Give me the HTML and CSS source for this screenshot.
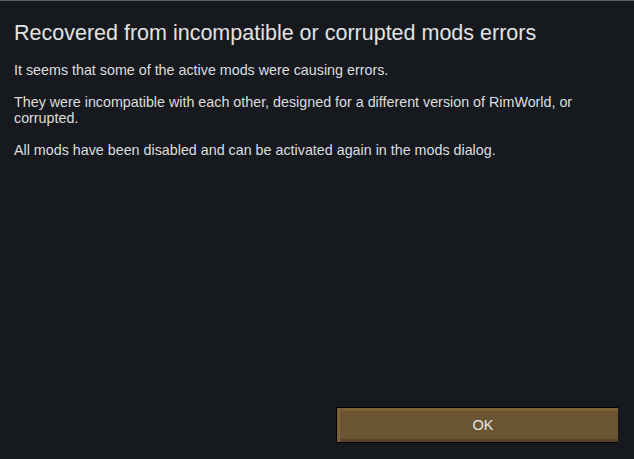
FILE: index.html
```html
<!DOCTYPE html>
<html>
<head>
<meta charset="utf-8">
<link rel="stylesheet" href="styles.css">
</head>
<body>
<div class="dialog">
  <h1 class="title">Recovered from incompatible or corrupted mods errors</h1>
  <div class="body">
    <p>It seems that some of the active mods were causing errors.</p>
    <p>They were incompatible with each other, designed for a different version of RimWorld, or corrupted.</p>
    <p>All mods have been disabled and can be activated again in the mods dialog.</p>
  </div>
  <div class="footer">
    <button class="ok">OK</button>
  </div>
</div>
</body>
</html>
```
FILE: styles.css
```css
html, body {
  margin: 0;
  padding: 0;
  height: 100%;
  background: #16191e;
}
.dialog {
  box-sizing: border-box;
  height: 459px;
  width: 634px;
  border-top: 1px solid #5b616b;
  padding: 18px 14px 0 14px;
  display: flex;
  flex-direction: column;
  font-family: "Liberation Sans", Arial, sans-serif;
  color: #dedede;
}
.title {
  margin: 0;
  font-size: 21.5px;
  font-weight: normal;
  line-height: 28px;
  color: #e2e2e2;
}
.body {
  margin-top: 15px;
  font-size: 14.3px;
  line-height: 16px;
  padding-right: 40px;
}
.body p {
  margin: 0 0 16px 0;
}
.footer {
  margin-top: auto;
  display: flex;
  justify-content: flex-end;
  padding-bottom: 16px;
}
.ok {
  box-sizing: border-box;
  width: 282px;
  height: 36px;
  margin-right: 2px;
  border: 1px solid #000;
  border-right: none;
  background: #6b5431;
  box-shadow: inset 3px 3px 0 #7a6036, inset 0 -3px 0 #57432a;
  color: #e6e6e6;
  font-family: "Liberation Sans", Arial, sans-serif;
  font-size: 14.5px;
  padding: 0 0 0 11px;
}
```
